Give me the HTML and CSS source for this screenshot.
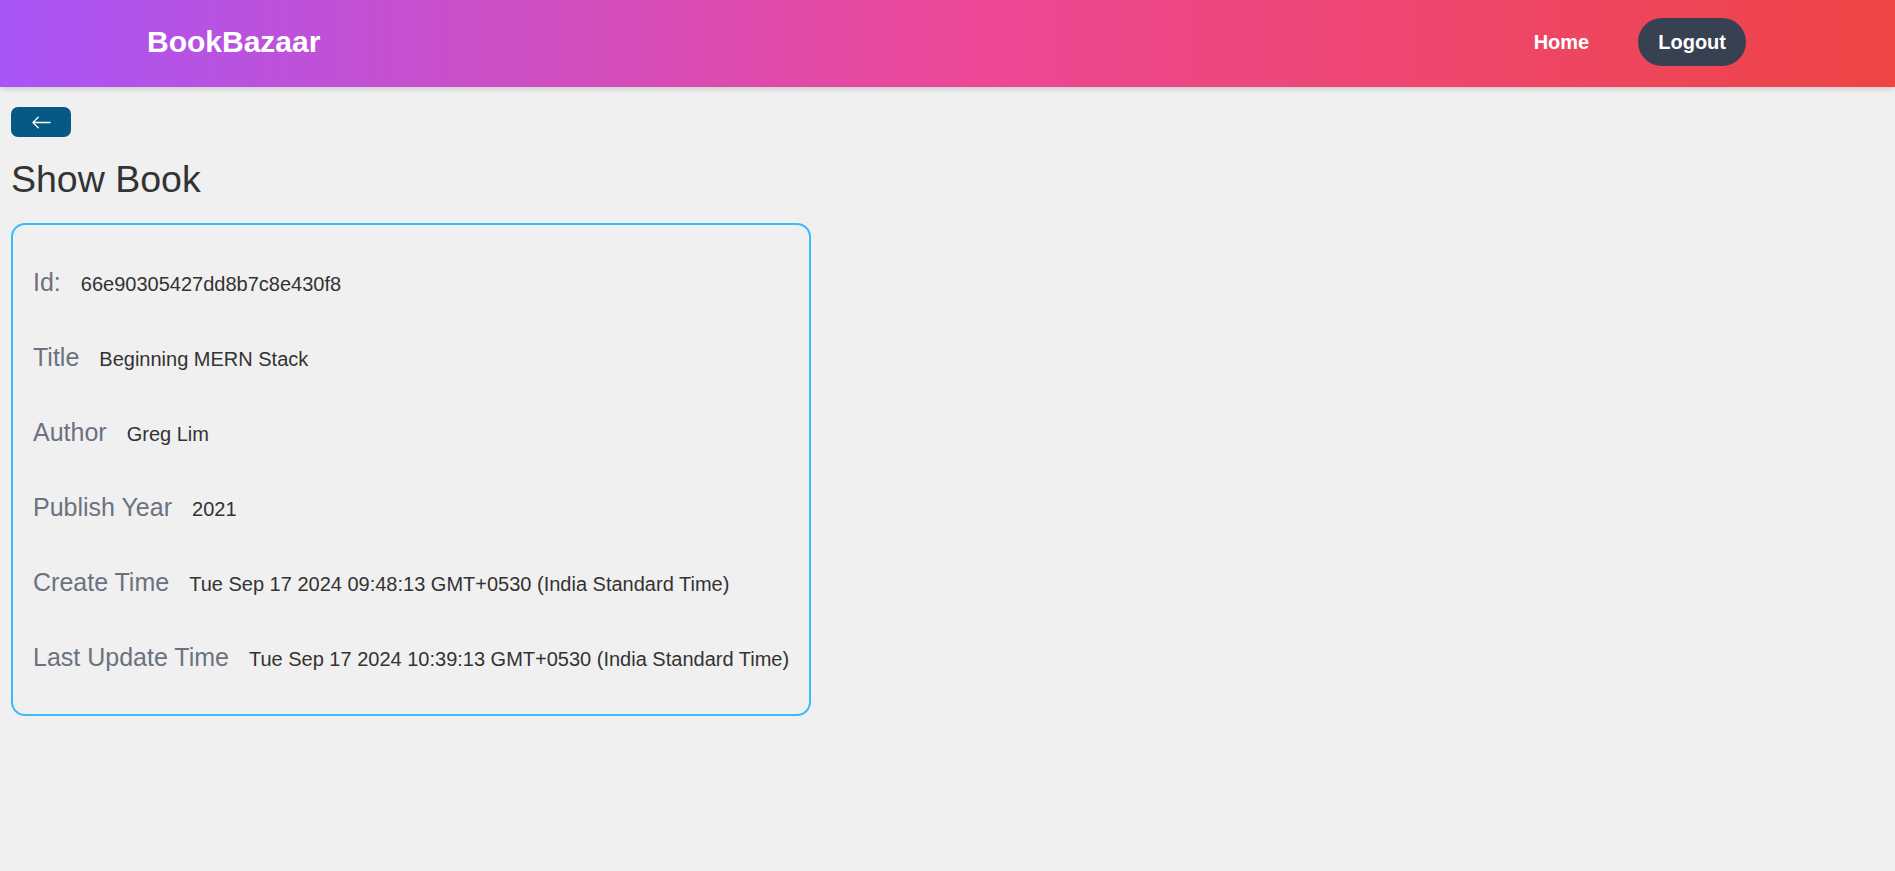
FILE: index.html
```html
<!DOCTYPE html>
<html lang="en">
<head>
<meta charset="utf-8">
<title>BookBazaar - Show Book</title>
<link rel="stylesheet" href="styles.css">
</head>
<body>
<nav class="navbar">
  <div class="brand">BookBazaar</div>
  <div class="nav-links">
    <a class="nav-home" href="#">Home</a>
    <button class="nav-logout" type="button">Logout</button>
  </div>
</nav>
<main class="page">
  <a class="back-btn" href="#" aria-label="Back">
    <svg class="back-icon" viewBox="0 0 16 16" width="21" height="21" fill="currentColor"><path fill-rule="evenodd" d="M15 8a.5.5 0 0 0-.5-.5H2.707l3.147-3.146a.5.5 0 1 0-.708-.708l-4 4a.5.5 0 0 0 0 .708l4 4a.5.5 0 0 0 .708-.708L2.707 8.5H14.5A.5.5 0 0 0 15 8z"/></svg>
  </a>
  <h1 class="title">Show Book</h1>
  <section class="card">
    <div class="row"><span class="label">Id:</span><span class="value">66e90305427dd8b7c8e430f8</span></div>
    <div class="row"><span class="label">Title</span><span class="value">Beginning MERN Stack</span></div>
    <div class="row"><span class="label">Author</span><span class="value">Greg Lim</span></div>
    <div class="row"><span class="label">Publish Year</span><span class="value">2021</span></div>
    <div class="row"><span class="label">Create Time</span><span class="value">Tue Sep 17 2024 09:48:13 GMT+0530 (India Standard Time)</span></div>
    <div class="row"><span class="label">Last Update Time</span><span class="value">Tue Sep 17 2024 10:39:13 GMT+0530 (India Standard Time)</span></div>
  </section>
</main>
</body>
</html>
```
FILE: styles.css
```css
* { box-sizing: border-box; }
html, body { margin: 0; padding: 0; }
body {
  background: #f0f0f0;
  font-family: "Liberation Sans", Arial, sans-serif;
  color: #333;
}
.navbar {
  height: 87px;
  display: flex;
  align-items: center;
  justify-content: space-between;
  padding: 0 149px 3px 147px;
  background: linear-gradient(to right, #a855f7, #ec4899, #ef4444);
  box-shadow: 0 4px 6px -1px rgba(0,0,0,0.1), 0 2px 4px -2px rgba(0,0,0,0.1);
}
.brand {
  color: #fff;
  font-size: 30px;
  font-weight: 700;
  line-height: 36px;
}
.nav-links {
  display: flex;
  align-items: center;
  gap: 49px;
}
.nav-home {
  color: #fff;
  font-size: 20px;
  font-weight: 700;
  text-decoration: none;
  line-height: 28px;
}
.nav-logout {
  height: 48px;
  padding: 0 20px;
  border: none;
  border-radius: 9999px;
  background: #374151;
  color: #fff;
  font-family: inherit;
  font-size: 20px;
  font-weight: 700;
  line-height: 48px;
}
.page {
  padding: 20px 11px;
}
.back-btn {
  display: flex;
  align-items: center;
  justify-content: center;
  width: 60px;
  height: 30px;
  border-radius: 7px;
  background: #075985;
  color: #fff;
}
.back-icon { display: block; }
.title {
  margin: 22px 0 24px;
  font-size: 37.5px;
  line-height: 40px;
  font-weight: 400;
  color: #333;
}
.card {
  width: fit-content;
  display: flex;
  flex-direction: column;
  gap: 42px;
  padding: 41px 20px 40px 20px;
  border: 2px solid #38bdf8;
  border-radius: 14px;
}
.row {
  height: 33px;
  line-height: 33px;
  white-space: nowrap;
}
.label {
  font-size: 25px;
  color: #6b7280;
  margin-right: 20px;
}
.value {
  font-size: 20px;
  line-height: 1;
  color: #333;
}
```
